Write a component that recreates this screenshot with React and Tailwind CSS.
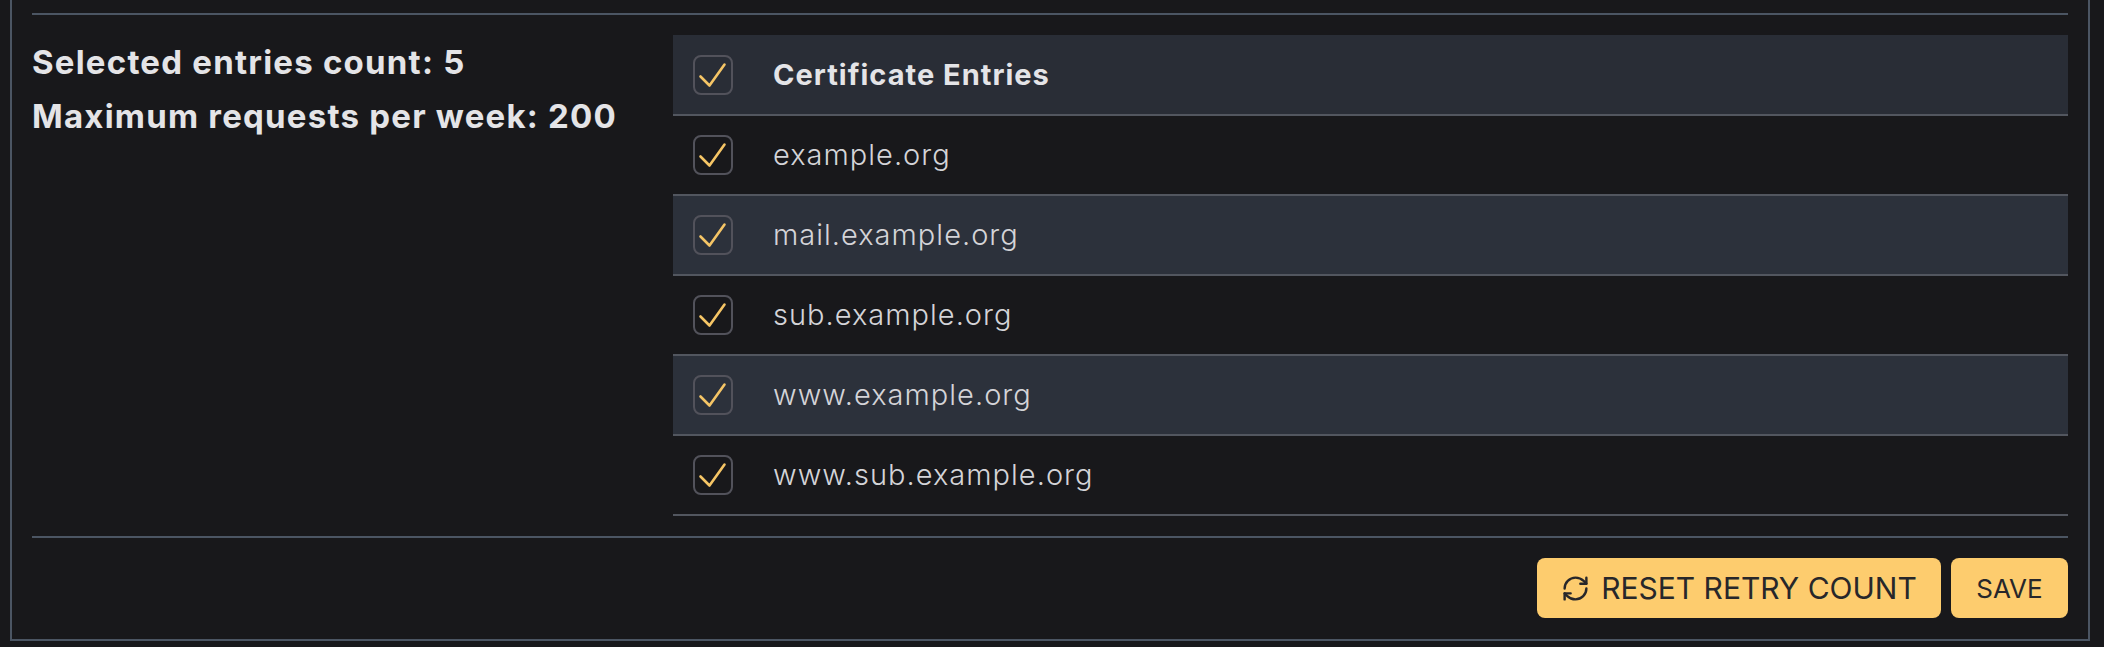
import { RefreshCw } from "lucide-react";

const entries = ["example.org", "mail.example.org", "sub.example.org", "www.example.org", "www.sub.example.org"];

function Checkbox() {
  return (
    <span className="flex h-10 w-10 items-center justify-center rounded-lg border-2 border-[#52525b]">
      <svg viewBox="0 0 36 36" className="h-9 w-9" fill="none" stroke="#f5c566" strokeWidth="2.6" strokeLinecap="round" strokeLinejoin="round">
        <polyline points="5.5,19.5 14.5,28.5 29.5,7.5" />
      </svg>
    </span>
  );
}

function Row({ label, shaded, header }) {
  return (
    <div className={`flex items-center border-b-2 border-[#52565f] pl-5 ${header ? "h-[81px] bg-[#292d36]" : "h-20"} ${shaded ? "bg-[#2c313b]" : ""}`}>
      <Checkbox />
      <span className={`ml-10 text-[29px] ${header ? "font-bold tracking-[0.035em] text-[#e4e4e7]" : "font-light tracking-[0.035em] text-[#d4d4d8]"}`}>{label}</span>
    </div>
  );
}

export default function App() {
  return (
    <main className="flex h-screen flex-col bg-[#18181b] pl-[10px] pr-[14px] pb-[6px] font-['Inter',sans-serif]">
      <section className="flex flex-1 flex-col border-x-2 border-b-2 border-[#4b5563] px-5 pt-[13px]">
        <div className="border-t-2 border-[#4b5563]" />
        <div className="mt-5 flex">
          <div className="w-[641px] text-[33px] font-bold leading-[54px] tracking-[0.037em] text-[#e4e4e7]">
            <p>Selected entries count: 5</p>
            <p>Maximum requests per week: 200</p>
          </div>
          <div className="flex-1">
            <Row label="Certificate Entries" header />
            {entries.map((entry, i) => (
              <Row key={entry} label={entry} shaded={i % 2 === 1} />
            ))}
          </div>
        </div>
        <div className="mt-5 border-t-2 border-[#4b5563]" />
        <div className="mt-5 flex justify-end gap-[10px]">
          <button type="button" className="flex h-[60px] w-[404px] items-center justify-center gap-[11px] rounded-lg bg-[#fdcc6e] text-[30px] font-normal text-[#27272a]">
            <RefreshCw size={29} strokeWidth={2} />
            RESET RETRY COUNT
          </button>
          <button type="button" className="flex h-[60px] w-[117px] items-center justify-center rounded-lg bg-[#fdcc6e] text-[26px] font-normal text-[#27272a]">
            SAVE
          </button>
        </div>
      </section>
    </main>
  );
}
